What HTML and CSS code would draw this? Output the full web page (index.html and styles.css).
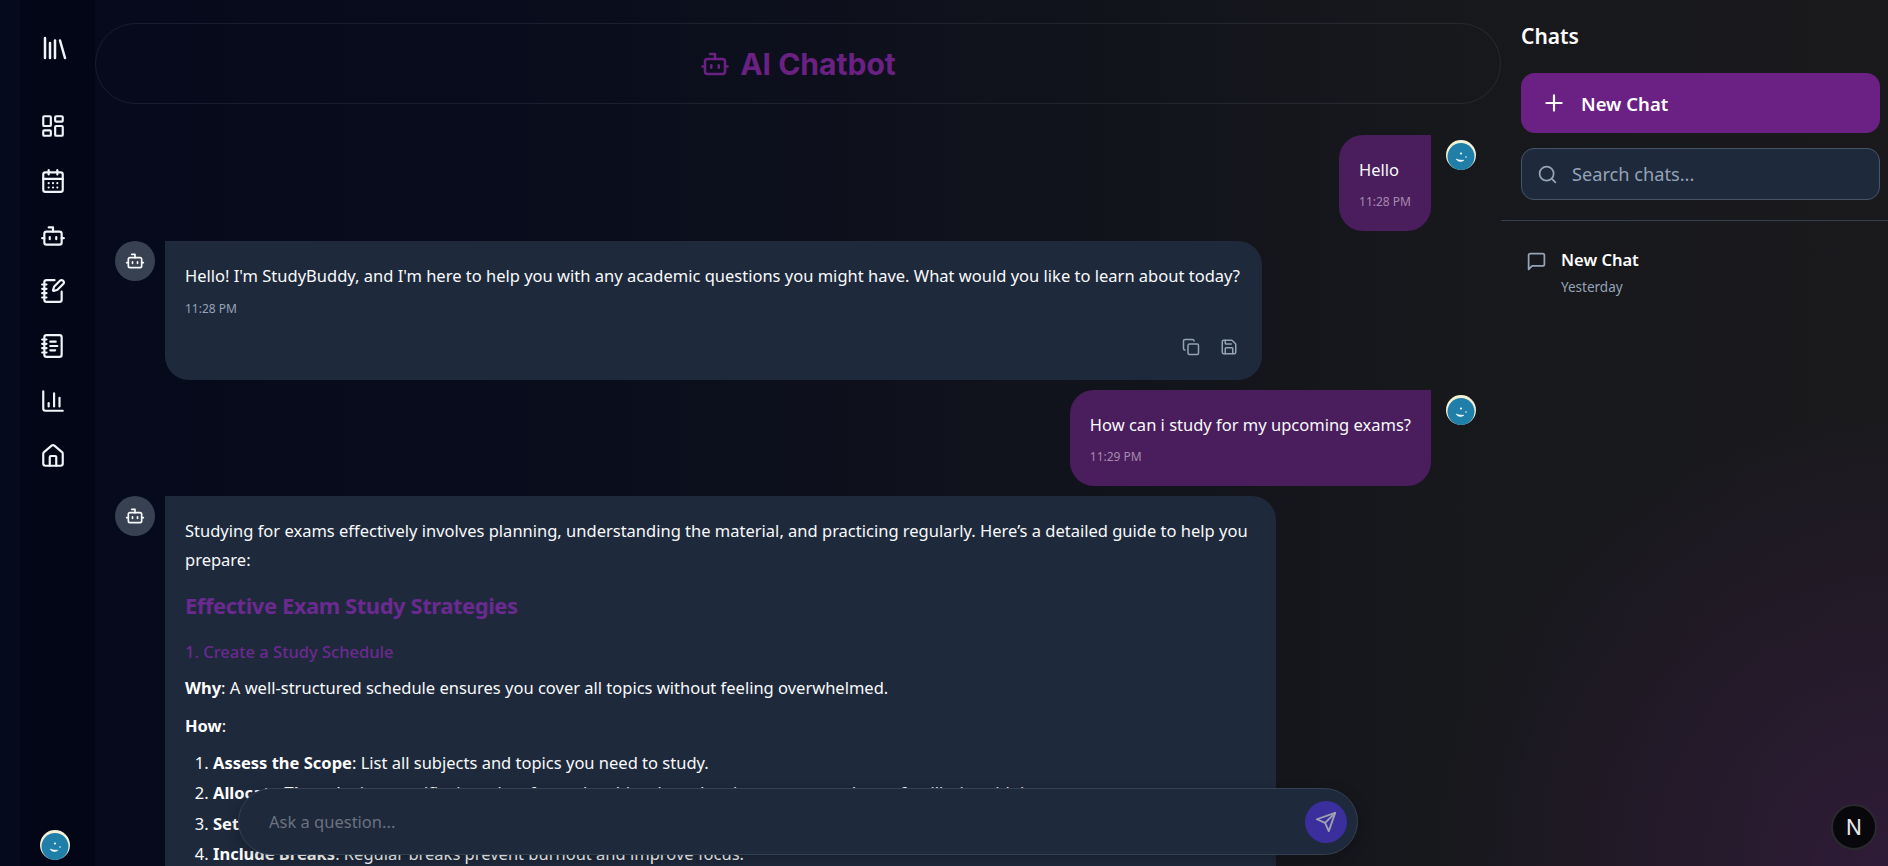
FILE: index.html
```html
<!DOCTYPE html>
<html lang="en">
<head>
<meta charset="utf-8">
<title>AI Chatbot</title>
<link rel="stylesheet" href="styles.css">
</head>
<body>
<svg class="sprite" aria-hidden="true">
  <defs>
    <symbol id="i-bot" viewBox="0 0 24 24"><path d="M12 8V4H8"/><rect width="16" height="12" x="4" y="8" rx="2"/><path d="M2 14h2"/><path d="M20 14h2"/><path d="M15 13v2"/><path d="M9 13v2"/></symbol>
    <symbol id="i-face" viewBox="0 0 30 30"><circle class="f-back" cx="15" cy="15" r="15"/><circle class="f-front" cx="15" cy="16.500" r="13.500"/><path class="f-smile" d="M10 19c2 3 5.500 3.200 8 1.200-2.800.2-5.400-.2-8-1.200z"/><circle class="f-eye" cx="15" cy="13.500" r="1.100"/><circle class="f-eye" cx="20" cy="17" r=".8"/></symbol>
  </defs>
</svg>
<div class="app">
  <nav class="rail">
    <svg class="ic logo" viewBox="0 0 24 24"><path d="m16 6 4 14"/><path d="M12 6v14"/><path d="M8 8v12"/><path d="M4 4v16"/></svg>
    <div class="rail-links">
      <svg class="ic" viewBox="0 0 24 24"><rect width="7" height="9" x="3" y="3" rx="1"/><rect width="7" height="5" x="14" y="3" rx="1"/><rect width="7" height="9" x="14" y="12" rx="1"/><rect width="7" height="5" x="3" y="16" rx="1"/></svg>
      <svg class="ic" viewBox="0 0 24 24"><path d="M8 2v4"/><path d="M16 2v4"/><rect width="18" height="18" x="3" y="4" rx="2"/><path d="M3 10h18"/><path d="M8 14h.01"/><path d="M12 14h.01"/><path d="M16 14h.01"/><path d="M8 18h.01"/><path d="M12 18h.01"/><path d="M16 18h.01"/></svg>
      <svg class="ic"><use href="#i-bot"/></svg>
      <svg class="ic" viewBox="0 0 24 24"><path d="M13.400 2H6a2 2 0 0 0-2 2v16a2 2 0 0 0 2 2h12a2 2 0 0 0 2-2v-7.400"/><path d="M2 6h4"/><path d="M2 10h4"/><path d="M2 14h4"/><path d="M2 18h4"/><path d="M21.378 5.626a1 1 0 1 0-3.004-3.004l-5.010 5.012a2 2 0 0 0-.506.854l-.837 2.870a.5.5 0 0 0 .620.620l2.870-.837a2 2 0 0 0 .854-.506z"/></svg>
      <svg class="ic" viewBox="0 0 24 24"><path d="M2 6h4"/><path d="M2 10h4"/><path d="M2 14h4"/><path d="M2 18h4"/><rect width="16" height="20" x="4" y="2" rx="2"/><path d="M9.500 8h5"/><path d="M9.500 12H16"/><path d="M9.500 16H14"/></svg>
      <svg class="ic" viewBox="0 0 24 24"><path d="M3 3v16a2 2 0 0 0 2 2h16"/><path d="M18 17V9"/><path d="M13 17V5"/><path d="M8 17v-3"/></svg>
      <svg class="ic" viewBox="0 0 24 24"><path d="M15 21v-8a1 1 0 0 0-1-1h-4a1 1 0 0 0-1 1v8"/><path d="M3 10a2 2 0 0 1 .709-1.528l7-5.999a2 2 0 0 1 2.582 0l7 5.999A2 2 0 0 1 21 10v9a2 2 0 0 1-2 2H5a2 2 0 0 1-2-2z"/></svg>
    </div>
    <svg class="face"><use href="#i-face"/></svg>
  </nav>

  <main class="main">
    <header class="title-bar">
      <svg class="ic title-ic"><use href="#i-bot"/></svg>
      <h1>AI Chatbot</h1>
    </header>

    <section class="thread">
      <div class="row row-user">
        <div class="bubble user">
          <p class="text">Hello</p>
          <time>11:28 PM</time>
        </div>
        <svg class="face"><use href="#i-face"/></svg>
      </div>

      <div class="row">
        <span class="bot-badge"><svg class="ic"><use href="#i-bot"/></svg></span>
        <div class="bubble bot">
          <p class="text">Hello! I'm StudyBuddy, and I'm here to help you with any academic questions you might have. What would you like to learn about today?</p>
          <time>11:28 PM</time>
          <div class="actions">
            <svg class="ic" viewBox="0 0 24 24"><rect width="14" height="14" x="8" y="8" rx="2"/><path d="M4 16c-1.100 0-2-.9-2-2V4c0-1.100.9-2 2-2h10c1.100 0 2 .9 2 2"/></svg>
            <svg class="ic" viewBox="0 0 24 24"><path d="M15.200 3a2 2 0 0 1 1.400.6l3.800 3.800a2 2 0 0 1 .6 1.400V19a2 2 0 0 1-2 2H5a2 2 0 0 1-2-2V5a2 2 0 0 1 2-2z"/><path d="M17 21v-7a1 1 0 0 0-1-1H8a1 1 0 0 0-1 1v7"/><path d="M7 3v4a1 1 0 0 0 1 1h7"/></svg>
          </div>
        </div>
      </div>

      <div class="row row-user">
        <div class="bubble user">
          <p class="text">How can i study for my upcoming exams?</p>
          <time>11:29 PM</time>
        </div>
        <svg class="face"><use href="#i-face"/></svg>
      </div>

      <div class="row">
        <span class="bot-badge"><svg class="ic"><use href="#i-bot"/></svg></span>
        <div class="bubble bot long">
          <p class="text">Studying for exams effectively involves planning, understanding the material, and practicing regularly. Here’s a detailed guide to help you prepare:</p>
          <h2>Effective Exam Study Strategies</h2>
          <h3>1. Create a Study Schedule</h3>
          <p class="text para"><strong>Why</strong>: A well-structured schedule ensures you cover all topics without feeling overwhelmed.</p>
          <p class="text para-next"><strong>How</strong>:</p>
          <ol>
            <li><strong>Assess the Scope</strong>: List all subjects and topics you need to study.</li>
            <li><strong>Allocate Time</strong>: Assign specific time slots for each subject based on importance and your familiarity with it.</li>
            <li><strong>Set Goals</strong>: Define clear, achievable targets for every study session you plan.</li>
            <li><strong>Include Breaks</strong>: Regular breaks prevent burnout and improve focus.</li>
          </ol>
        </div>
      </div>
    </section>

    <form class="ask">
      <span class="ask-text">Ask a question...</span>
      <span class="send">
        <svg class="ic" viewBox="0 0 24 24"><path d="m22 2-7 20-4-9-9-4Z"/><path d="M22 2 11 13"/></svg>
      </span>
    </form>
  </main>

  <aside class="panel">
    <div class="panel-top">
      <h2>Chats</h2>
      <button class="new-chat" type="button">
        <svg class="ic" viewBox="0 0 24 24"><path d="M5 12h14"/><path d="M12 5v14"/></svg>
        <span>New Chat</span>
      </button>
      <div class="search">
        <svg class="ic" viewBox="0 0 24 24"><circle cx="11" cy="11" r="8"/><path d="m21 21-4.300-4.300"/></svg>
        <span>Search chats...</span>
      </div>
    </div>
    <div class="chat-item">
      <svg class="ic" viewBox="0 0 24 24"><path d="M21 15a2 2 0 0 1-2 2H7l-4 4V5a2 2 0 0 1 2-2h14a2 2 0 0 1 2 2z"/></svg>
      <div>
        <div class="chat-name">New Chat</div>
        <div class="chat-date">Yesterday</div>
      </div>
    </div>
  </aside>
</div>
<div class="next-badge">N</div>
</body>
</html>
```
FILE: styles.css
```css
* { box-sizing: border-box; }
html, body { margin: 0; height: 100%; overflow: hidden; }
body {
  font-family: "Noto Sans", "Open Sans", sans-serif;
  color: #f8fafc;
  background: #0a0e1c;
}
.sprite { display: none; }
.ic {
  fill: none;
  stroke: currentColor;
  stroke-width: 2;
  stroke-linecap: round;
  stroke-linejoin: round;
  flex: none;
}
.f-back { fill: #f3f1d6; stroke: none; }
.f-front { fill: #1f7fa8; stroke: none; }
.f-smile { fill: #fff; stroke: #fff; stroke-width: .5; }
.f-eye { fill: #fff; stroke: none; }
.face { width: 30px; height: 30px; flex: none; }

.app {
  display: flex;
  height: 866px;
  padding-left: 20px;
  overflow: hidden;
  background:
    radial-gradient(ellipse 450px 450px at 100% 100%, rgba(64, 28, 76, .55), rgba(64, 28, 76, 0) 100%),
    linear-gradient(90deg, #050a1c 0%, #080c1c 25%, #12141c 60%, #17181c 75%, #1a1a1d 100%);
}

.rail {
  width: 75px;
  flex: none;
  display: flex;
  flex-direction: column;
  align-items: center;
  padding: 33px 10px 6px 0;
  background: #020617;
}
.rail .ic { width: 26px; height: 26px; color: #f1f5f9; }
.rail .logo { width: 30px; height: 30px; margin-left: 4px; }
.rail-links {
  display: flex;
  flex-direction: column;
  gap: 29px;
  margin-top: 50px;
  flex: 1;
}
.rail .face { margin-left: 5px; }

.main {
  position: relative;
  flex: 1;
  min-width: 0;
  display: flex;
  flex-direction: column;
  overflow: hidden;
}
.title-bar {
  height: 81px;
  margin-top: 23px;
  flex: none;
  display: flex;
  align-items: center;
  justify-content: center;
  gap: 10px;
  border: 1px solid rgba(148, 163, 184, .12);
  border-radius: 41px;
  color: #6b2183;
}
.title-ic { width: 30px; height: 30px; }
.title-bar h1 {
  margin: 0;
  font-family: Inter, sans-serif;
  font-size: 30px;
  font-weight: 700;
}

.thread {
  padding: 31px 25px 0 20px;
  display: flex;
  flex-direction: column;
  gap: 10px;
}
.row { display: flex; gap: 10px; align-items: flex-start; flex: none; }
.row-user { justify-content: flex-end; gap: 15px; }
.row-user .face { margin-top: 5px; }
.bot-badge {
  width: 40px;
  height: 40px;
  flex: none;
  border-radius: 50%;
  background: #374151;
  display: flex;
  align-items: center;
  justify-content: center;
}
.bot-badge .ic { width: 20px; height: 20px; }
.bubble {
  padding: 20px;
  border-radius: 24px;
  font-size: 16.500px;
  line-height: 29px;
}
.bubble.user { background: #4a1d5c; border-top-right-radius: 0; height: 96px; }
.bubble.bot { background: #1e293b; border-top-left-radius: 0; }
.bubble.long { width: 1111px; padding-bottom: 60px; }
.bubble.bot:not(.long) { width: 1097px; height: 139px; }
.text { margin: 0; }
time {
  display: block;
  margin-top: 11px;
  font-size: 12px;
  line-height: 16px;
  color: #94a3b8;
}
.user time { color: #a78ab0; margin-top: 10px; }
.actions {
  display: flex;
  justify-content: flex-end;
  gap: 20px;
  margin-top: 21px;
  padding-right: 4px;
}
.actions .ic { width: 18px; height: 18px; color: #94a3b8; }
.long h2 {
  margin: 16px 0 0;
  font-size: 22px;
  letter-spacing: -.45px;
  line-height: 30px;
  font-weight: 700;
  color: #6b2a90;
}
.long h3 {
  margin: 18px 0 0;
  font-size: 16.500px;
  line-height: 28px;
  font-weight: 500;
  color: #6b2a90;
}
.para { margin-top: 7px; }
.para-next { margin-top: 9px; }
.long ol { margin: 8px 0 0; padding: 0 0 0 28px; }
.long li { line-height: 30.400px; }
strong { font-weight: 700; color: #fff; }

.ask {
  position: absolute;
  left: 143px;
  top: 788px;
  width: 1120px;
  height: 67px;
  display: flex;
  align-items: center;
  justify-content: space-between;
  padding: 0 10px 0 30px;
  background: #1e293b;
  border: 1px solid #334155;
  border-radius: 34px;
  box-shadow: 0 4px 14px rgba(0, 0, 0, .25);
}
.ask-text { font-size: 16.500px; color: #6b7280; }
.send {
  width: 42px;
  height: 42px;
  border-radius: 50%;
  background: #3b2f9e;
  display: flex;
  align-items: center;
  justify-content: center;
  color: #9ca3af;
}
.send .ic { width: 22px; height: 22px; }

.panel {
  width: 387px;
  flex: none;
  display: flex;
  flex-direction: column;
}
.panel-top {
  padding: 0 8px 20px 20px;
  border-bottom: 1px solid #334155;
}
.panel-top h2 {
  margin: 0;
  padding-top: 20px;
  height: 73px;
  font-size: 21px;
  line-height: 32px;
  font-weight: 600;
  color: #fff;
}
.new-chat {
  width: 100%;
  height: 60px;
  border: 0;
  border-radius: 14px;
  background: #6b2183;
  color: #fff;
  display: flex;
  align-items: center;
  gap: 14px;
  padding: 0 20px;
  font: 600 18.500px "Noto Sans", sans-serif;
}
.new-chat .ic { width: 26px; height: 26px; }
.search {
  height: 52px;
  margin-top: 15px;
  border: 1px solid #475569;
  border-radius: 13px;
  background: #1e293b;
  display: flex;
  align-items: center;
  gap: 14px;
  padding: 0 15px;
  font-size: 18.200px;
  color: #94a3b8;
}
.search .ic { width: 21px; height: 21px; }
.chat-item {
  display: flex;
  gap: 14px;
  padding: 27px 0 0 25px;
}
.chat-item .ic { width: 21px; height: 21px; color: #94a3b8; margin-top: 3px; }
.chat-name { font-size: 16.500px; line-height: 24px; font-weight: 600; color: #fff; }
.chat-date { margin-top: 6px; font-size: 13.500px; line-height: 18px; color: #94a3b8; }

.next-badge {
  position: fixed;
  left: 1831px;
  top: 804px;
  width: 46px;
  height: 46px;
  border-radius: 50%;
  background: #08080c;
  border: 2px solid #2a2a2e;
  display: flex;
  align-items: center;
  justify-content: center;
  font: 400 21px Inter, sans-serif;
  color: #e5e7eb;
}
```
